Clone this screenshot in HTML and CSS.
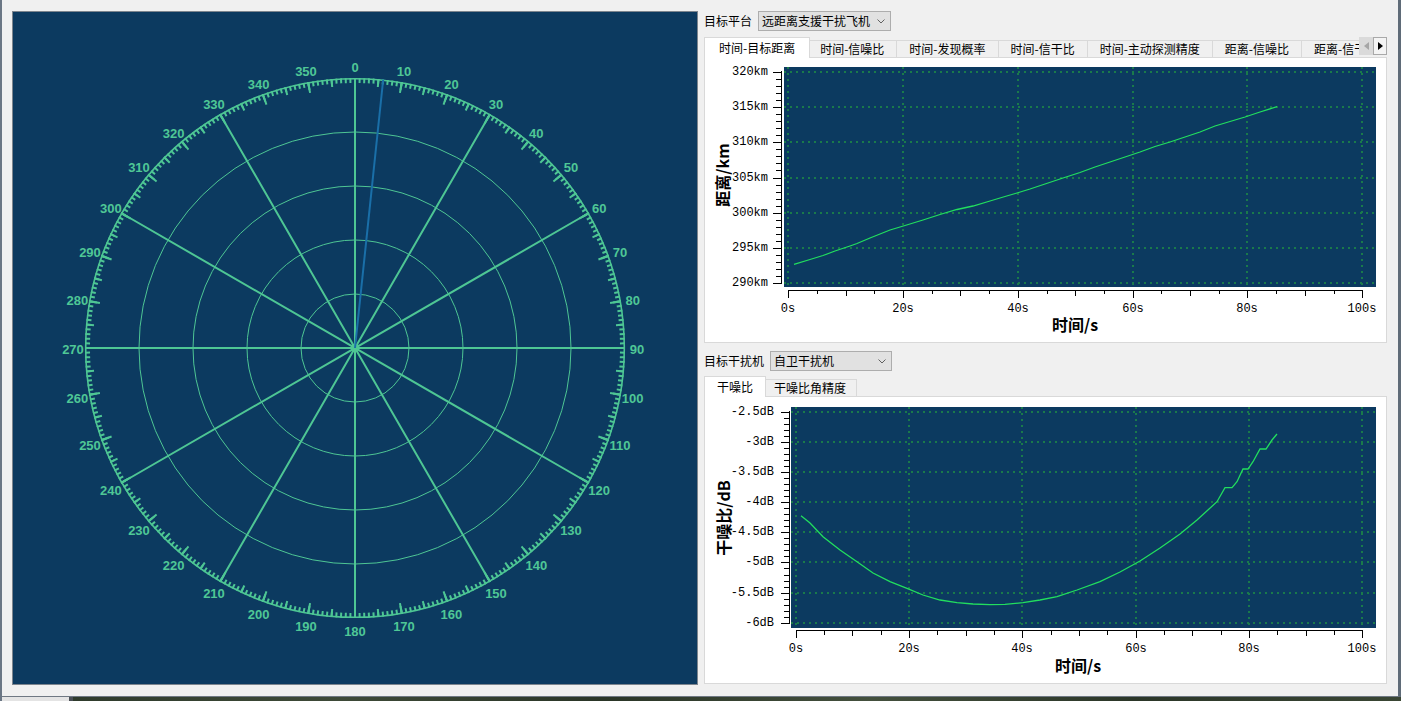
FILE: index.html
```html
<!DOCTYPE html>
<html lang="zh">
<head>
<meta charset="utf-8">
<title>radar</title>
<link rel="stylesheet" href="styles.css">
</head>
<body>
<div class="frame">
  <div class="main">
    <div class="radar-panel">
      <svg class="radar" width="684" height="672" viewBox="13 12 684 672">
        <g fill="none" stroke="#4ec694">
          <circle cx="355" cy="348" r="54" stroke-width="1"/>
          <circle cx="355" cy="348" r="108" stroke-width="1"/>
          <circle cx="355" cy="348" r="162" stroke-width="1"/>
          <circle cx="355" cy="348" r="216" stroke-width="1"/>
          <circle cx="355" cy="348" r="269.3" stroke-width="1.6"/>
          <circle cx="355" cy="348" r="267.5" stroke-width="5" pathLength="360" stroke-dasharray="0.43 0.57" stroke-dashoffset="0.215"/>
          <circle cx="355" cy="348" r="266" stroke-width="8" pathLength="360" stroke-dasharray="0.43 4.57" stroke-dashoffset="0.215"/>
          <circle cx="355" cy="348" r="264.5" stroke-width="11" pathLength="360" stroke-dasharray="0.43 9.57" stroke-dashoffset="0.215"/>
          <path stroke-width="2" d="M355 78V618 M490 114.2L220 581.8 M588.8 213L121.2 483 M85 348H625 M588.8 483L121.2 213 M490 581.8L220 114.2"/>
        </g>
        <line x1="355" y1="348" x2="383.2" y2="79.5" stroke="#1a6fa8" stroke-width="2"/>
        <g class="deg" text-anchor="middle" dominant-baseline="central">
          <text x="355" y="67">0</text>
          <text x="404" y="71.3">10</text>
          <text x="451.4" y="84">20</text>
          <text x="496" y="104.8">30</text>
          <text x="536.3" y="133">40</text>
          <text x="571" y="167.7">50</text>
          <text x="599.2" y="208">60</text>
          <text x="620" y="252.6">70</text>
          <text x="632.7" y="300">80</text>
          <text x="637" y="349">90</text>
          <text x="632.7" y="398">100</text>
          <text x="620" y="445.4">110</text>
          <text x="599.2" y="490">120</text>
          <text x="571" y="530.3">130</text>
          <text x="536.3" y="565">140</text>
          <text x="496" y="593.2">150</text>
          <text x="451.4" y="614">160</text>
          <text x="404" y="626.7">170</text>
          <text x="355" y="631">180</text>
          <text x="306" y="626.7">190</text>
          <text x="258.6" y="614">200</text>
          <text x="214" y="593.2">210</text>
          <text x="173.7" y="565">220</text>
          <text x="139" y="530.3">230</text>
          <text x="110.8" y="490">240</text>
          <text x="90" y="445.4">250</text>
          <text x="77.3" y="398">260</text>
          <text x="73" y="349">270</text>
          <text x="77.3" y="300">280</text>
          <text x="90" y="252.6">290</text>
          <text x="110.8" y="208">300</text>
          <text x="139" y="167.7">310</text>
          <text x="173.7" y="133">320</text>
          <text x="214" y="104.8">330</text>
          <text x="258.6" y="84">340</text>
          <text x="306" y="71.3">350</text>
        </g>
      </svg>
    </div>

    <div class="side">
      <div class="field">
        <span class="lbl">目标平台</span>
        <div class="combo combo1"><span>远距离支援干扰飞机</span><svg class="chev" width="8" height="5" viewBox="0 0 8 5"><polyline points="0.5,0.5 4,4 7.5,0.5" fill="none" stroke="#606060" stroke-width="1"/></svg></div>
      </div>
      <div class="tabs">
        <div class="strip">
          <div class="tab on">时间-目标距离</div>
          <div class="tab">时间-信噪比</div>
          <div class="tab">时间-发现概率</div>
          <div class="tab">时间-信干比</div>
          <div class="tab">时间-主动探测精度</div>
          <div class="tab">距离-信噪比</div>
          <div class="tab last">距离-信干比</div>
        </div>
        <div class="scroll">
          <div class="sb sb1"><svg width="5" height="8" viewBox="0 0 5 8"><polygon points="5,0 5,8 0,4" fill="#a6a6a6"/></svg></div>
          <div class="sb sb2"><svg width="5" height="8" viewBox="0 0 5 8"><polygon points="0,0 0,8 5,4" fill="#000"/></svg></div>
        </div>
      </div>
      <div class="pane pane1">
        <svg class="chart" width="681" height="284" viewBox="705 58 681 284">
          <rect x="784" y="67" width="592" height="220" fill="#0c3a60"/>
          <path class="grid" d="M784 72H1376 M784 107H1376 M784 142H1376 M784 178H1376 M784 213H1376 M784 248H1376 M784 283H1376 M788 67V287 M903 67V287 M1018 67V287 M1133 67V287 M1247 67V287 M1362 67V287"/>
          <polyline class="data" points="794,264.3 810,259.5 823,255.5 835,251 850,246 857,243.5 870,238 880,234 890,230 905,225.5 923,220 940,214.5 957,209.5 973,206 990,201 1005,196.5 1017,193 1030,189 1045,184 1063,178 1080,172.5 1095,167 1110,162 1125,157 1140,152 1155,146.5 1170,142 1185,137 1200,132 1215,126 1230,121.5 1245,117 1260,112 1277,106.7"/>
          <path class="axis" d="M781.5 71V284 M773 72.5H781 M773 107.5H781 M773 142.5H781 M773 178.5H781 M773 213.5H781 M773 248.5H781 M773 283.5H781 M776 79.5H781 M776 86.5H781 M776 93.5H781 M776 100.5H781 M776 114.5H781 M776 121.5H781 M776 128.5H781 M776 135.5H781 M776 149.5H781 M776 156.5H781 M776 163.5H781 M776 170.5H781 M776 185.5H781 M776 192.5H781 M776 199.5H781 M776 206.5H781 M776 220.5H781 M776 227.5H781 M776 234.5H781 M776 241.5H781 M776 255.5H781 M776 262.5H781 M776 269.5H781 M776 276.5H781"/>
          <path class="axis" d="M788 290.5H1363 M788.5 291V298 M903.5 291V298 M1018.5 291V298 M1133.5 291V298 M1247.5 291V298 M1362.5 291V298 M846.5 291V296 M960.5 291V296 M1075.5 291V296 M1190.5 291V296 M1305.5 291V296 M817.5 291V294 M874.5 291V294 M932.5 291V294 M989.5 291V294 M1047.5 291V294 M1104.5 291V294 M1161.5 291V294 M1219.5 291V294 M1276.5 291V294 M1334.5 291V294"/>
          <g class="tk" text-anchor="end" dominant-baseline="central">
            <text x="768" y="72">320km</text>
            <text x="768" y="107">315km</text>
            <text x="768" y="142">310km</text>
            <text x="768" y="178">305km</text>
            <text x="768" y="213">300km</text>
            <text x="768" y="248">295km</text>
            <text x="768" y="283">290km</text>
          </g>
          <g class="tk" text-anchor="middle" dominant-baseline="central">
            <text x="788" y="309">0s</text>
            <text x="903" y="309">20s</text>
            <text x="1018" y="309">40s</text>
            <text x="1133" y="309">60s</text>
            <text x="1247" y="309">80s</text>
            <text x="1362" y="309">100s</text>
          </g>
          <text class="ttl" x="1075" y="324" text-anchor="middle" dominant-baseline="central">时间/s</text>
          <text class="ttl" x="722" y="175" text-anchor="middle" dominant-baseline="central" transform="rotate(-90 722 175)">距离/km</text>
        </svg>
      </div>

      <div class="field field2">
        <span class="lbl">目标干扰机</span>
        <div class="combo combo2"><span>自卫干扰机</span><svg class="chev" width="8" height="5" viewBox="0 0 8 5"><polyline points="0.5,0.5 4,4 7.5,0.5" fill="none" stroke="#606060" stroke-width="1"/></svg></div>
      </div>
      <div class="tabs tabs2">
        <div class="strip">
          <div class="tab on">干噪比</div>
          <div class="tab">干噪比角精度</div>
        </div>
      </div>
      <div class="pane pane2">
        <svg class="chart" width="681" height="286" viewBox="705 397 681 286">
          <rect x="791" y="407" width="585" height="221" fill="#0c3a60"/>
          <path class="grid" d="M791 412H1376 M791 442H1376 M791 472H1376 M791 502H1376 M791 532H1376 M791 562H1376 M791 593H1376 M791 623H1376 M796 407V628 M909 407V628 M1022 407V628 M1136 407V628 M1249 407V628 M1362 407V628"/>
          <polyline class="data" points="801,515.7 810,523 823,536.7 840,550 857,561.7 873,573 890,581.7 907,588.3 923,595 940,600 957,602.7 973,604 990,604.7 1005,604.3 1023,602.7 1040,600 1057,596.7 1077,590 1100,581.7 1120,572 1140,561 1160,548 1180,534 1197,520 1217,501.7 1225,487.7 1232,487.7 1237,481.7 1243,469 1248,469 1253,461.7 1260,449 1266,449 1272,440 1277,434"/>
          <path class="axis" d="M789.5 411V624 M781 412.5H789 M781 442.5H789 M781 472.5H789 M781 502.5H789 M781 532.5H789 M781 562.5H789 M781 593.5H789 M781 623.5H789 M784 418.5H789 M784 424.5H789 M784 430.5H789 M784 436.5H789 M784 448.5H789 M784 454.5H789 M784 460.5H789 M784 466.5H789 M784 478.5H789 M784 484.5H789 M784 490.5H789 M784 496.5H789 M784 508.5H789 M784 514.5H789 M784 520.5H789 M784 526.5H789 M784 538.5H789 M784 544.5H789 M784 550.5H789 M784 556.5H789 M784 568.5H789 M784 575.5H789 M784 581.5H789 M784 587.5H789 M784 599.5H789 M784 605.5H789 M784 611.5H789 M784 617.5H789"/>
          <path class="axis" d="M796 630.5H1363 M796.5 631V638 M909.5 631V638 M1022.5 631V638 M1136.5 631V638 M1249.5 631V638 M1362.5 631V638 M852.5 631V636 M966.5 631V636 M1079.5 631V636 M1192.5 631V636 M1306.5 631V636 M824.5 631V635 M881.5 631V635 M937.5 631V635 M994.5 631V635 M1051.5 631V635 M1107.5 631V635 M1164.5 631V635 M1221.5 631V635 M1277.5 631V635 M1334.5 631V635"/>
          <g class="tk" text-anchor="end" dominant-baseline="central">
            <text x="774" y="412">-2.5dB</text>
            <text x="774" y="442">-3dB</text>
            <text x="774" y="472">-3.5dB</text>
            <text x="774" y="502">-4dB</text>
            <text x="774" y="532">-4.5dB</text>
            <text x="774" y="562">-5dB</text>
            <text x="774" y="593">-5.5dB</text>
            <text x="774" y="623">-6dB</text>
          </g>
          <g class="tk" text-anchor="middle" dominant-baseline="central">
            <text x="796" y="649">0s</text>
            <text x="909" y="649">20s</text>
            <text x="1022" y="649">40s</text>
            <text x="1136" y="649">60s</text>
            <text x="1249" y="649">80s</text>
            <text x="1362" y="649">100s</text>
          </g>
          <text class="ttl" x="1078" y="665" text-anchor="middle" dominant-baseline="central">时间/s</text>
          <text class="ttl" x="723" y="518" text-anchor="middle" dominant-baseline="central" transform="rotate(-90 723 518)">干噪比/dB</text>
        </svg>
      </div>
    </div>
  </div>
  <div class="desk"><div class="d1"></div><div class="d2"></div><div class="d3"></div></div>
</div>
</body>
</html>
```

FILE: styles.css
```css
* { box-sizing: border-box; }
html, body { margin: 0; padding: 0; }
body {
  width: 1401px;
  height: 701px;
  overflow: hidden;
  background: #f0f0f0;
  font-family: "Noto Sans CJK SC", sans-serif;
  font-size: 12px;
  color: #000;
}
.frame {
  width: 1401px;
  height: 701px;
  display: flex;
  flex-direction: column;
}
.main {
  height: 697px;
  display: flex;
  gap: 6px;
  padding: 11px 0 0 10px;
  border-left: 2px solid #6a7684;
  border-right: 3px solid #5f6b78;
  border-bottom: 1px solid #6f7883;
  background: #f0f0f0;
}
.radar-panel {
  width: 686px;
  height: 674px;
  flex: none;
  border: 1px solid #7d858e;
  background: #0c3a60;
}
.radar { display: block; }
.deg text {
  font-family: "Liberation Sans", sans-serif;
  font-weight: bold;
  font-size: 13px;
  fill: #4fc796;
}
.side {
  width: 683px;
  flex: none;
  display: flex;
  flex-direction: column;
}
.field {
  display: flex;
  align-items: center;
  gap: 6px;
  height: 20px;
  line-height: 18px;
}
.field2 { margin-top: 8px; }
.lbl { white-space: nowrap; }
.combo {
  display: flex;
  align-items: center;
  justify-content: space-between;
  height: 20px;
  border: 1px solid #adadad;
  background: #e1e1e1;
  padding: 0 5px 0 3px;
  white-space: nowrap;
}
.combo1 { width: 133px; }
.combo2 { width: 122px; }
.chev { display: block; flex: none; }
.tabs {
  display: flex;
  height: 20px;
  margin-top: 6px;
}
.tabs2 { margin-top: 5px; }
.strip {
  flex: 1;
  min-width: 0;
  display: flex;
  align-items: flex-end;
  padding-left: 2px;
  overflow-x: clip;
}
.tab {
  flex: none;
  height: 17px;
  line-height: 15px;
  padding: 0 12px;
  border: 1px solid #d9d9d9;
  border-bottom: none;
  background: #f0f0f0;
  white-space: nowrap;
  margin-left: -1px;
}
.tab.on {
  height: 21px;
  line-height: 19px;
  margin: 0 -2px -1px -2px;
  padding: 0 14px;
  background: #fff;
  position: relative;
  z-index: 1;
}
.tabs2 .tab { padding: 0 10px; }
.tabs2 .tab.on { padding: 0 12px; }
.scroll {
  display: flex;
  align-self: flex-start;
  height: 18px;
  flex: none;
}
.sb {
  width: 14px;
  height: 18px;
  display: flex;
  align-items: center;
  justify-content: center;
}
.sb svg { display: block; }
.sb1 { background: #dadada; }
.sb2 { background: #f4f4f4; border: 1px solid #a9a9a9; }
.pane {
  border: 1px solid #d9d9d9;
  background: #fff;
}
.pane1 { height: 286px; }
.pane2 { height: 288px; }
.chart { display: block; }
.grid {
  fill: none;
  stroke: #1a7a4b;
  stroke-width: 2;
  stroke-dasharray: 2 4;
}
.data {
  fill: none;
  stroke: #22de5e;
  stroke-width: 1.3;
}
.axis {
  fill: none;
  stroke: #000;
  stroke-width: 1;
  shape-rendering: crispEdges;
}
.tk text {
  font-family: "Liberation Mono", monospace;
  font-size: 12px;
  fill: #000;
}
.ttl {
  font-family: "Noto Sans CJK SC", sans-serif;
  font-weight: bold;
  font-size: 16px;
  fill: #000;
}
.desk {
  display: flex;
  height: 4px;
}
.d1 { width: 69px; background: #e4e4e4; border-left: 2px solid #6a7684; }
.d2 { width: 4px; background: #4a4f55; }
.d3 {
  flex: 1;
  background: linear-gradient(90deg, #2f3b2c, #3e4a38 20%, #2a3527 40%, #44503d 60%, #2b3628 80%, #3a4634);
}
```
